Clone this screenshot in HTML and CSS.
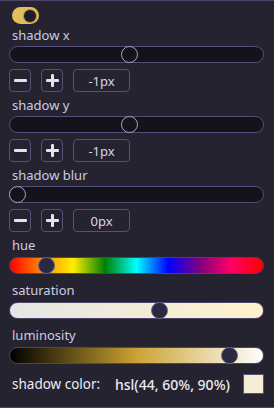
FILE: index.html
```html
<!DOCTYPE html>
<html lang="en">
<head>
  <meta charset="UTF-8" />
  <meta name="viewport" content="width=device-width, initial-scale=1.0"/>
  <title>shadow controls</title>
  <link rel="stylesheet" href="styles.css">
</head>
<body>
  <div class="panel">
    <div class="toggle on"><span class="toggle-knob"></span></div>

    <div class="group">
      <label class="label">shadow x</label>
      <div class="track"><span class="thumb" style="--p:0.475"></span></div>
      <div class="stepper">
        <button class="step minus"><svg width="13" height="3"><rect width="13" height="3" rx="1"/></svg></button>
        <button class="step plus"><svg width="13" height="13"><rect y="5" width="13" height="3" rx="1"/><rect x="5" width="3" height="13" rx="1"/></svg></button>
        <input class="value" type="text" value="-1px">
      </div>
    </div>

    <div class="group">
      <label class="label">shadow y</label>
      <div class="track"><span class="thumb" style="--p:0.475"></span></div>
      <div class="stepper">
        <button class="step minus"><svg width="13" height="3"><rect width="13" height="3" rx="1"/></svg></button>
        <button class="step plus"><svg width="13" height="13"><rect y="5" width="13" height="3" rx="1"/><rect x="5" width="3" height="13" rx="1"/></svg></button>
        <input class="value" type="text" value="-1px">
      </div>
    </div>

    <div class="group">
      <label class="label">shadow blur</label>
      <div class="track"><span class="thumb" style="--p:0"></span></div>
      <div class="stepper">
        <button class="step minus"><svg width="13" height="3"><rect width="13" height="3" rx="1"/></svg></button>
        <button class="step plus"><svg width="13" height="13"><rect y="5" width="13" height="3" rx="1"/><rect x="5" width="3" height="13" rx="1"/></svg></button>
        <input class="value" type="text" value="0px">
      </div>
    </div>

    <div class="color-group first">
      <label class="label">hue</label>
      <div class="track color hue"><span class="thumb dot" style="--p:0.122"></span></div>
    </div>
    <div class="color-group">
      <label class="label">saturation</label>
      <div class="track color sat"><span class="thumb dot" style="--p:0.6"></span></div>
    </div>
    <div class="color-group">
      <label class="label">luminosity</label>
      <div class="track color lum"><span class="thumb dot" style="--p:0.9"></span></div>
    </div>

    <div class="result">
      <span class="result-label">shadow color:</span>
      <span class="result-value">hsl(44, 60%, 90%)</span>
      <span class="swatch"></span>
    </div>
  </div>
</body>
</html>
```

FILE: styles.css
```css
* { box-sizing: border-box; margin: 0; padding: 0; }
html, body { height: 100%; }
body {
  background: #24232f;
  font-family: 'Noto Sans', sans-serif;
  color: #cfcbe0;
}
.panel {
  height: 408px;
  border-top: 1px solid #4b4568;
  border-bottom: 1px solid #4b4568;
  padding: 6px 10px 0 9px;
}
.toggle {
  width: 27px; height: 17px;
  margin-left: 3px;
  border-radius: 9px;
  background: #dfbe5e;
  display: flex; align-items: center; justify-content: flex-end;
  padding-right: 3px;
}
.toggle-knob {
  width: 12px; height: 12px; border-radius: 50%;
  background: #1d1c27;
  box-shadow: 0 0 0 1px #b88a3c;
}
.label {
  display: block;
  font-size: 13px; line-height: 17px;
  padding-left: 3px;
}
.group { margin-top: 3px; }
.group + .group { margin-top: 5px; }
.track {
  position: relative;
  height: 17px;
  margin-top: 2px;
  border: 1px solid #564f7b;
  border-radius: 9px;
  background: #14131b;
}
.thumb {
  position: absolute; top: -1px;
  left: calc(var(--p) * (100% - 17px) - 1px);
  width: 17px; height: 17px; border-radius: 50%;
  background: #14131b;
  border: 1px solid #aba7c6;
}
.stepper { display: flex; gap: 10px; margin-top: 6px; }
.step {
  width: 22px; height: 23px;
  border: 1px solid #565076;
  border-radius: 4px;
  background: transparent;
  display: flex; align-items: center; justify-content: center;
}
.step svg { fill: #e4e2ee; display: block; }
.value {
  width: 57px; height: 23px;
  border: 1px solid #565076;
  border-radius: 4px;
  background: transparent;
  color: #d8d6e6;
  font-family: 'Noto Sans', sans-serif;
  font-size: 13px;
  text-align: center;
  outline: none;
}
.color-group { margin-top: 8px; }
.color-group.first { margin-top: 5px; }
.track.color { margin-top: 3px; border-color: #4b4568; }
.hue {
  background: linear-gradient(to right, #ff0000, #ff8800, #ffee00, #008000, #00ffff, #0000ff, #800080, #ff0066, #ff0000);
}
.sat { background: linear-gradient(to right, hsl(44, 0%, 90%), hsl(44, 100%, 90%)); }
.lum { background: linear-gradient(to right, hsl(44, 60%, 0%), hsl(44, 60%, 50%), hsl(44, 60%, 100%)); }
.thumb.dot { background: #2a2940; border-color: #6a6390; }
.result {
  display: flex; align-items: center;
  margin-top: 10px; height: 20px;
  font-size: 13.5px;
  color: #ecebf3;
  padding-left: 3px;
  white-space: nowrap;
}
.result-label { width: 103px; flex-shrink: 0; }
.result-value { flex: 1; font-size: 14px; font-weight: 500; }
.swatch {
  flex-shrink: 0;
  width: 21px; height: 20px;
  background: hsl(44, 60%, 90%);
  border: 1px solid #5a5080;
}
```
